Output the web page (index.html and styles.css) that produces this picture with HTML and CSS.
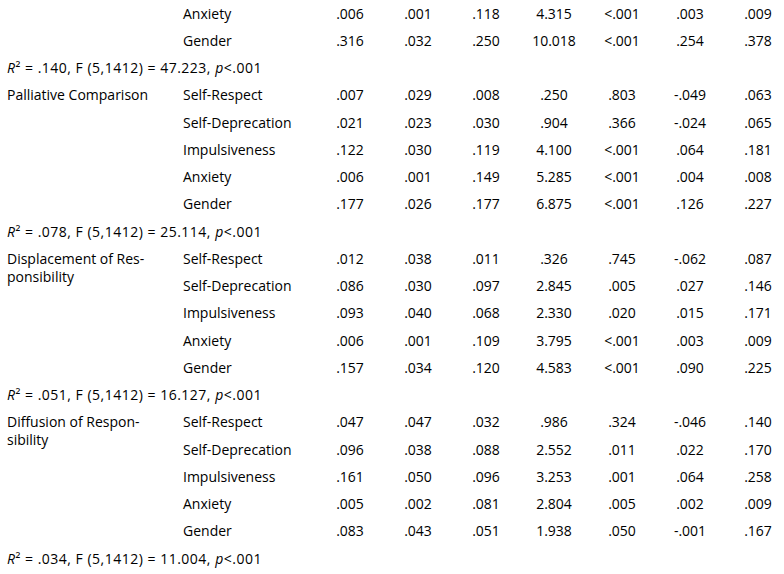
FILE: index.html
```html
<!DOCTYPE html>
<html lang="en">
<head>
<meta charset="utf-8">
<title>Regression table</title>
<link rel="stylesheet" href="styles.css">
</head>
<body>
<table class="stats">
  <colgroup>
    <col class="c-label"><col class="c-var">
    <col class="c-num"><col class="c-num"><col class="c-num"><col class="c-num"><col class="c-num"><col class="c-num"><col class="c-num">
  </colgroup>
  <tbody>
    <tr><td class="label" rowspan="2"></td><td class="var">Anxiety</td><td>.006</td><td>.001</td><td>.118</td><td>4.315</td><td>&lt;.001</td><td>.003</td><td>.009</td></tr>
    <tr><td class="var">Gender</td><td>.316</td><td>.032</td><td>.250</td><td>10.018</td><td>&lt;.001</td><td>.254</td><td>.378</td></tr>
    <tr><td class="summary" colspan="9"><i>R</i>² = .140, F (5,1412) = 47.223, <i>p</i>&lt;.001</td></tr>

    <tr><td class="label" rowspan="5">Palliative Comparison</td><td class="var">Self-Respect</td><td>.007</td><td>.029</td><td>.008</td><td>.250</td><td>.803</td><td>-.049</td><td>.063</td></tr>
    <tr><td class="var">Self-Deprecation</td><td>.021</td><td>.023</td><td>.030</td><td>.904</td><td>.366</td><td>-.024</td><td>.065</td></tr>
    <tr><td class="var">Impulsiveness</td><td>.122</td><td>.030</td><td>.119</td><td>4.100</td><td>&lt;.001</td><td>.064</td><td>.181</td></tr>
    <tr><td class="var">Anxiety</td><td>.006</td><td>.001</td><td>.149</td><td>5.285</td><td>&lt;.001</td><td>.004</td><td>.008</td></tr>
    <tr><td class="var">Gender</td><td>.177</td><td>.026</td><td>.177</td><td>6.875</td><td>&lt;.001</td><td>.126</td><td>.227</td></tr>
    <tr><td class="summary" colspan="9"><i>R</i>² = .078, F (5,1412) = 25.114, <i>p</i>&lt;.001</td></tr>

    <tr><td class="label" rowspan="5">Displacement of Res-<br>ponsibility</td><td class="var">Self-Respect</td><td>.012</td><td>.038</td><td>.011</td><td>.326</td><td>.745</td><td>-.062</td><td>.087</td></tr>
    <tr><td class="var">Self-Deprecation</td><td>.086</td><td>.030</td><td>.097</td><td>2.845</td><td>.005</td><td>.027</td><td>.146</td></tr>
    <tr><td class="var">Impulsiveness</td><td>.093</td><td>.040</td><td>.068</td><td>2.330</td><td>.020</td><td>.015</td><td>.171</td></tr>
    <tr><td class="var">Anxiety</td><td>.006</td><td>.001</td><td>.109</td><td>3.795</td><td>&lt;.001</td><td>.003</td><td>.009</td></tr>
    <tr><td class="var">Gender</td><td>.157</td><td>.034</td><td>.120</td><td>4.583</td><td>&lt;.001</td><td>.090</td><td>.225</td></tr>
    <tr><td class="summary" colspan="9"><i>R</i>² = .051, F (5,1412) = 16.127, <i>p</i>&lt;.001</td></tr>

    <tr><td class="label" rowspan="5">Diffusion of Respon-<br>sibility</td><td class="var">Self-Respect</td><td>.047</td><td>.047</td><td>.032</td><td>.986</td><td>.324</td><td>-.046</td><td>.140</td></tr>
    <tr><td class="var">Self-Deprecation</td><td>.096</td><td>.038</td><td>.088</td><td>2.552</td><td>.011</td><td>.022</td><td>.170</td></tr>
    <tr><td class="var">Impulsiveness</td><td>.161</td><td>.050</td><td>.096</td><td>3.253</td><td>.001</td><td>.064</td><td>.258</td></tr>
    <tr><td class="var">Anxiety</td><td>.005</td><td>.002</td><td>.081</td><td>2.804</td><td>.005</td><td>.002</td><td>.009</td></tr>
    <tr><td class="var">Gender</td><td>.083</td><td>.043</td><td>.051</td><td>1.938</td><td>.050</td><td>-.001</td><td>.167</td></tr>
    <tr><td class="summary" colspan="9"><i>R</i>² = .034, F (5,1412) = 11.004, <i>p</i>&lt;.001</td></tr>
  </tbody>
</table>
</body>
</html>
```

FILE: styles.css
```css
html, body {
  margin: 0;
  padding: 0;
  background: #ffffff;
  overflow: hidden;
}

body {
  font-family: "Open Sans", "Liberation Sans", sans-serif;
  font-size: 14px;
  color: #000000;
}

.stats {
  border-collapse: collapse;
  table-layout: fixed;
  width: 792px;
}

.c-label { width: 176px; }
.c-var { width: 140px; }
.c-num { width: 68px; }

.stats tr {
  height: 27.25px;
}

.stats td {
  box-sizing: border-box;
  padding: 0;
  line-height: 18px;
  text-align: center;
  vertical-align: middle;
  white-space: nowrap;
}

.stats td.label {
  text-align: left;
  vertical-align: top;
  padding: 4.6px 0 0 7px;
}

.stats td.var {
  text-align: left;
  padding-left: 7px;
}

.stats td.summary {
  text-align: left;
  padding-left: 7px;
  letter-spacing: 0.5px;
}
```
